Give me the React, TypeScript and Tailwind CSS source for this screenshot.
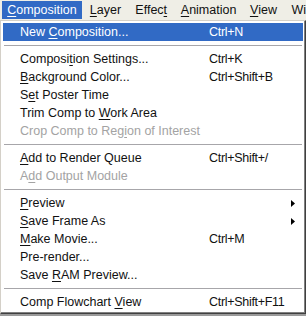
import React from "react";

type Item =
  | { sep: true }
  | { label: React.ReactNode; shortcut?: string; disabled?: boolean; sub?: boolean; active?: boolean; sep?: false };

const u = (s: string) => <span className="underline underline-offset-[2px] decoration-1">{s}</span>;

const items: Item[] = [
  { label: <>New {u("C")}omposition...</>, shortcut: "Ctrl+N", active: true },
  { sep: true },
  { label: <>Composi{u("t")}ion Settings...</>, shortcut: "Ctrl+K" },
  { label: <>{u("B")}ackground Color...</>, shortcut: "Ctrl+Shift+B" },
  { label: <>S{u("e")}t Poster Time</> },
  { label: <>Trim Comp to {u("W")}ork Area</> },
  { label: <>Crop Comp to Reg{u("i")}on of Interest</>, disabled: true },
  { sep: true },
  { label: <>{u("A")}dd to Render Queue</>, shortcut: "Ctrl+Shift+/" },
  { label: <>A{u("d")}d Output Module</>, disabled: true },
  { sep: true },
  { label: <>{u("P")}review</>, sub: true },
  { label: <>{u("S")}ave Frame As</>, sub: true },
  { label: <>{u("M")}ake Movie...</>, shortcut: "Ctrl+M" },
  { label: <>Pre-render...</> },
  { label: <>Save {u("R")}AM Preview...</> },
  { sep: true },
  { label: <>Comp Flowchart {u("V")}iew</>, shortcut: "Ctrl+Shift+F11" },
];

export default function App() {
  return (
    <div className="w-[306px] h-[316px] overflow-hidden bg-[#9a9a9a] text-[12.5px] leading-none font-['Liberation_Sans',Arial,sans-serif] text-[#111]">
      {/* Menu bar */}
      <div className="h-[20px] bg-[#efeee6] flex items-start pt-[1px] pl-[2px] whitespace-nowrap">
        <div className="h-[18px] w-[81px] flex items-center justify-center bg-[#316ac5] text-white">{u("C")}omposition</div>
        <div className="h-[18px] w-[46px] pl-[8px] flex items-center">{u("L")}ayer</div>
        <div className="h-[18px] w-[46px] pl-[8px] flex items-center">Effec{u("t")}</div>
        <div className="h-[18px] w-[70px] pl-[8px] flex items-center">{u("A")}nimation</div>
        <div className="h-[18px] w-[42px] pl-[8px] flex items-center">{u("V")}iew</div>
        <div className="h-[18px] pl-[8px] flex items-center">Wi</div>
      </div>

      {/* Dropdown */}
      <div className="w-[306px] bg-white border-l border-t border-l-[#d4d0c8] border-t-[#d4d0c8] border-r border-b border-r-[#404040] border-b-[#404040]">
        <div className="border-r border-b border-r-[#808080] border-b-[#808080] pl-[2px] pt-[2px] pr-[1px] pb-[1px]">
          {items.map((it, i) =>
            it.sep ? (
              <div key={i} className="h-[9px] pt-[4px] px-[1px]">
                <div className="h-[1px] bg-[#a7a6aa]" />
              </div>
            ) : (
              <div
                key={i}
                className={`h-[18px] flex items-center whitespace-nowrap ${
                  it.active ? "bg-[#316ac5] text-white" : it.disabled ? "text-[#a3a3a3]" : ""
                }`}
              >
                <div className="w-[206px] pl-[17px]">{it.label}</div>
                <div className="flex-1 tracking-[-0.3px]">{it.shortcut}</div>
                {it.sub && (
                  <svg width="4" height="7" viewBox="0 0 4 7" className="mr-[8px]">
                    <path d="M0 0 L4 3.5 L0 7 Z" fill="#000" />
                  </svg>
                )}
              </div>
            )
          )}
        </div>
      </div>
    </div>
  );
}
